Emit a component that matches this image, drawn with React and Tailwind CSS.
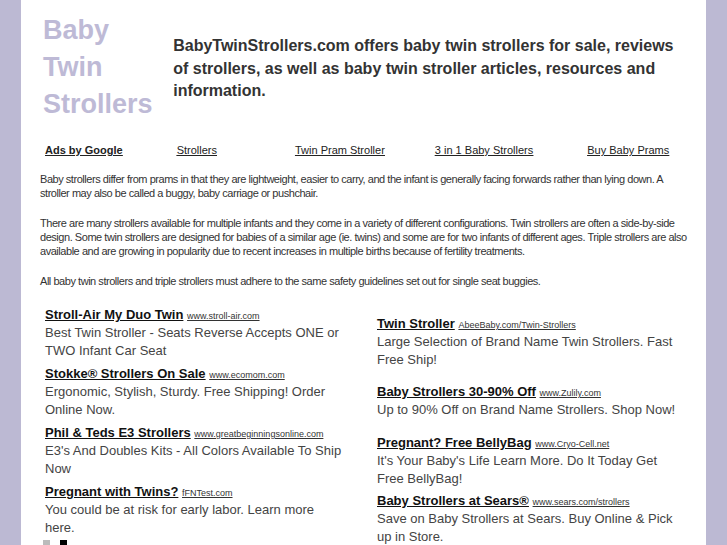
const leftAds = [
  { title: 'Stroll-Air My Duo Twin', url: 'www.stroll-air.com', text: 'Best Twin Stroller - Seats Reverse Accepts ONE or TWO Infant Car Seat', mt: 'mt-0' },
  { title: 'Stokke® Strollers On Sale', url: 'www.ecomom.com', text: 'Ergonomic, Stylish, Sturdy. Free Shipping! Order Online Now.', mt: 'mt-[5px]' },
  { title: 'Phil & Teds E3 Strollers', url: 'www.greatbeginningsonline.com', text: "E3's And Doubles Kits - All Colors Available To Ship Now", mt: 'mt-[5px]' },
  { title: 'Pregnant with Twins?', url: 'fFNTest.com', text: 'You could be at risk for early labor. Learn more here.', mt: 'mt-[5px]' },
];

const rightAds = [
  { title: 'Twin Stroller', url: 'AbeeBaby.com/Twin-Strollers', text: 'Large Selection of Brand Name Twin Strollers. Fast Free Ship!', mt: 'mt-0' },
  { title: 'Baby Strollers 30-90% Off', url: 'www.Zulily.com', text: 'Up to 90% Off on Brand Name Strollers. Shop Now!', mt: 'mt-[14px]' },
  { title: 'Pregnant? Free BellyBag', url: 'www.Cryo-Cell.net', text: "It's Your Baby's Life Learn More. Do It Today Get Free BellyBag!", mt: 'mt-[15px]' },
  { title: 'Baby Strollers at Sears®', url: 'www.sears.com/strollers', text: 'Save on Baby Strollers at Sears. Buy Online & Pick up in Store.', mt: 'mt-[4px]' },
];

const Ad = ({ ad }) => (
  <div className={ad.mt}>
    <div className="h-[18px] text-[13px] leading-[18px] whitespace-nowrap">
      <a href="#" className="font-bold text-[#111] underline">{ad.title}</a>{' '}
      <a href="#" className="text-[9px] leading-none text-[#333] underline">{ad.url}</a>
    </div>
    <p className="text-[13px] leading-[18px] text-[#444]">{ad.text}</p>
  </div>
);

export default function App() {
  return (
    <div className="bg-[#bcb9d3] px-[21px] [font-family:'Liberation_Sans',Arial,sans-serif] overflow-hidden h-[545px]">
      <div className="bg-white h-full pl-[19px] pr-[16px]">
        {/* header */}
        <div className="flex pt-[12px]">
          <div className="w-[134px] pl-[3px] text-[27px] leading-[37px] font-bold text-[#bebad6]">
            Baby<br />Twin<br />Strollers
          </div>
          <h1 className="pt-[23px] w-[520px] text-[16px] leading-[22.5px] font-bold text-[#333]">
            BabyTwinStrollers.com offers baby twin strollers for sale, reviews of strollers, as well as baby twin stroller articles, resources and information.
          </h1>
        </div>

        {/* nav */}
        <div className="flex mt-[20px] pl-[5px] text-[11px] leading-[14px] text-[#222] underline">
          <a href="#" className="font-bold">Ads by Google</a>
          <a href="#" className="ml-[54px]">Strollers</a>
          <a href="#" className="ml-[78px]">Twin Pram Stroller</a>
          <a href="#" className="ml-[50px]">3 in 1 Baby Strollers</a>
          <a href="#" className="ml-[54px]">Buy Baby Prams</a>
        </div>

        {/* body */}
        <div className="mt-[15px] text-[11px] leading-[14px] tracking-[-0.46px] text-[#333] space-y-[16px]">
          <p>Baby strollers differ from prams in that they are lightweight, easier to carry, and the infant is generally facing forwards rather than lying down. A stroller may also be called a buggy, baby carriage or pushchair.</p>
          <p>There are many strollers available for multiple infants and they come in a variety of different configurations. Twin strollers are often a side-by-side design. Some twin strollers are designed for babies of a similar age (ie. twins) and some are for two infants of different ages. Triple strollers are also available and are growing in popularity due to recent increases in multiple births because of fertility treatments.</p>
          <p>All baby twin strollers and triple strollers must adhere to the same safety guidelines set out for single seat buggies.</p>
        </div>

        {/* ads */}
        <div className="flex mt-[18px] pl-[5px]">
          <div className="w-[298px] mr-[34px]">
            {leftAds.map((ad) => <Ad key={ad.title} ad={ad} />)}
            <div className="flex gap-[10px] mt-[3px] -ml-[2px]">
              <span className="w-[7px] h-[7px] bg-[#bbb]" />
              <span className="w-[7px] h-[7px] bg-black" />
            </div>
          </div>
          <div className="w-[304px] pt-[9px]">
            {rightAds.map((ad) => <Ad key={ad.title} ad={ad} />)}
          </div>
        </div>
      </div>
    </div>
  );
}
